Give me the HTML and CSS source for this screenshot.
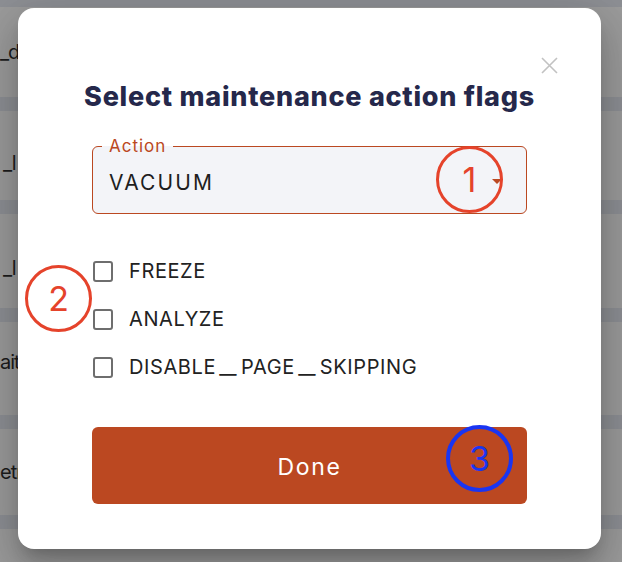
FILE: index.html
```html
<!DOCTYPE html>
<html lang="en">
<head>
  <meta charset="UTF-8">
  <meta name="viewport" content="width=device-width, initial-scale=1.0">
  <title>Maintenance flags</title>
  <link rel="stylesheet" href="styles.css">
</head>
<body>
  <main class="table">
    <div class="row"><span class="cell">_d</span></div>
    <div class="row"><span class="cell">_l</span></div>
    <div class="row"><span class="cell">_l</span></div>
    <div class="row"><span class="cell">ait</span></div>
    <div class="row"><span class="cell">etr</span></div>
    <div class="row"></div>
  </main>

  <div class="dialog">
    <button class="close" aria-label="Close">
      <svg width="17" height="17" viewBox="0 0 17 17">
        <path d="M1 1 L16 16 M16 1 L1 16" stroke="currentColor" stroke-width="1.6" fill="none" />
      </svg>
    </button>

    <h2 class="title">Select maintenance action flags</h2>

    <fieldset class="field">
      <legend>Action</legend>
      <div class="select">
        <span>VACUUM</span>
        <svg class="arrow" width="10" height="5" viewBox="0 0 10 5">
          <path d="M0 0 L10 0 L5 5 Z" fill="currentColor" />
        </svg>
      </div>
    </fieldset>

    <div class="flags">
      <label class="flag"><span class="box"></span>FREEZE</label>
      <label class="flag"><span class="box"></span>ANALYZE</label>
      <label class="flag"><span class="box"></span>DISABLE<span class="sep">_</span>PAGE<span class="sep">_</span>SKIPPING</label>
    </div>

    <button class="done">Done</button>
  </div>

  <span class="mark mark-1">1</span>
  <span class="mark mark-2">2</span>
  <span class="mark mark-3">3</span>
</body>
</html>
```

FILE: styles.css
```css
* {
  box-sizing: border-box;
  margin: 0;
  padding: 0;
}

body {
  width: 622px;
  height: 562px;
  overflow: hidden;
  background-color: #9b9b9b;
  font-family: Inter, "Noto Sans", sans-serif;
  color: #1e1e1e;
}

.table {
  display: flex;
  flex-flow: column;
  border-top: 7px solid #8d8f94;
}

.row {
  display: flex;
  align-items: center;
  height: 104px;
  border-bottom: 14px solid #8d8f94;
}

.row:nth-child(2) { height: 103px; }
.row:nth-child(3) { height: 108px; }
.row:nth-child(4) { height: 107px; }
.row:nth-child(5) { height: 100px; }
.row:nth-child(6) { height: 33px; border-bottom: none; }

.cell {
  margin-left: 0;
  font-size: 20px;
  letter-spacing: -1px;
  color: #1c1c1c;
  white-space: nowrap;
}

.row:nth-child(2) .cell,
.row:nth-child(3) .cell {
  margin-left: 3px;
  padding-top: 14px;
}

.row:nth-child(4) .cell { padding-bottom: 14px; }

.dialog {
  position: absolute;
  left: 18px;
  top: 8px;
  width: 583px;
  height: 541px;
  display: flex;
  flex-flow: column;
  padding: 73px 74px 46px;
  background-color: #fff;
  border-radius: 16px;
  box-shadow:
    0 11px 15px -7px rgba(0, 0, 0, 0.2),
    0 24px 38px 3px rgba(0, 0, 0, 0.14),
    0 9px 46px 8px rgba(0, 0, 0, 0.12);
}

.close {
  position: absolute;
  left: 523px;
  top: 49px;
  display: flex;
  border: none;
  background: none;
  color: #c2c2c2;
  cursor: pointer;
}

.title {
  margin: 0 -30px;
  font-size: 27px;
  line-height: 32px;
  font-weight: 800;
  text-align: center;
  white-space: nowrap;
  color: #25284b;
  letter-spacing: 0.75px;
}

.field {
  flex-shrink: 0;
  margin-top: 23px;
  padding: 0 16px 18px;
  border: 1.5px solid #bb4821;
  border-radius: 6px;
  background-color: #f3f4f8;
}

.field legend {
  margin-left: -7px;
  padding: 0 7px;
  font-size: 17px;
  line-height: 20px;
  letter-spacing: 1px;
  color: #bb4821;
}

.select {
  display: flex;
  align-items: center;
  justify-content: space-between;
  padding-top: 15px;
  font-size: 21px;
  line-height: 24px;
  letter-spacing: 2.1px;
}

.arrow {
  margin-right: 8px;
  margin-top: -4px;
  color: #bb4821;
}

.flags {
  display: flex;
  flex-flow: column;
  margin-top: 33px;
}

.flag {
  display: flex;
  align-items: center;
  height: 48px;
  padding-left: 1px;
  font-size: 20px;
  letter-spacing: 0.6px;
  color: #222;
}

.box {
  width: 20px;
  height: 21px;
  margin-right: 16px;
  border: 2px solid #6e6e6e;
  border-radius: 3px;
}

.sep {
  display: inline-block;
  width: 25px;
  transform: scaleX(1.9);
  text-align: center;
}

.done {
  flex-shrink: 0;
  margin-top: 36px;
  height: 77px;
  padding-top: 3px;
  border: none;
  border-radius: 6px;
  background-color: #bb4821;
  color: #fff;
  font-family: inherit;
  font-size: 23px;
  font-weight: 400;
  letter-spacing: 1.7px;
  cursor: pointer;
}

.mark {
  position: absolute;
  display: flex;
  align-items: center;
  justify-content: center;
  width: 67px;
  height: 67px;
  border: 3.5px solid #e5432b;
  border-radius: 50%;
  color: #e5432b;
  font-size: 34px;
  font-weight: 400;
}

.mark-1 { left: 436px; top: 146px; }
.mark-2 { left: 25px; top: 265px; }

.mark-3 {
  left: 446px;
  top: 425px;
  border-color: #1a35f2;
  color: #1a35f2;
  border-width: 4px;
}
```
